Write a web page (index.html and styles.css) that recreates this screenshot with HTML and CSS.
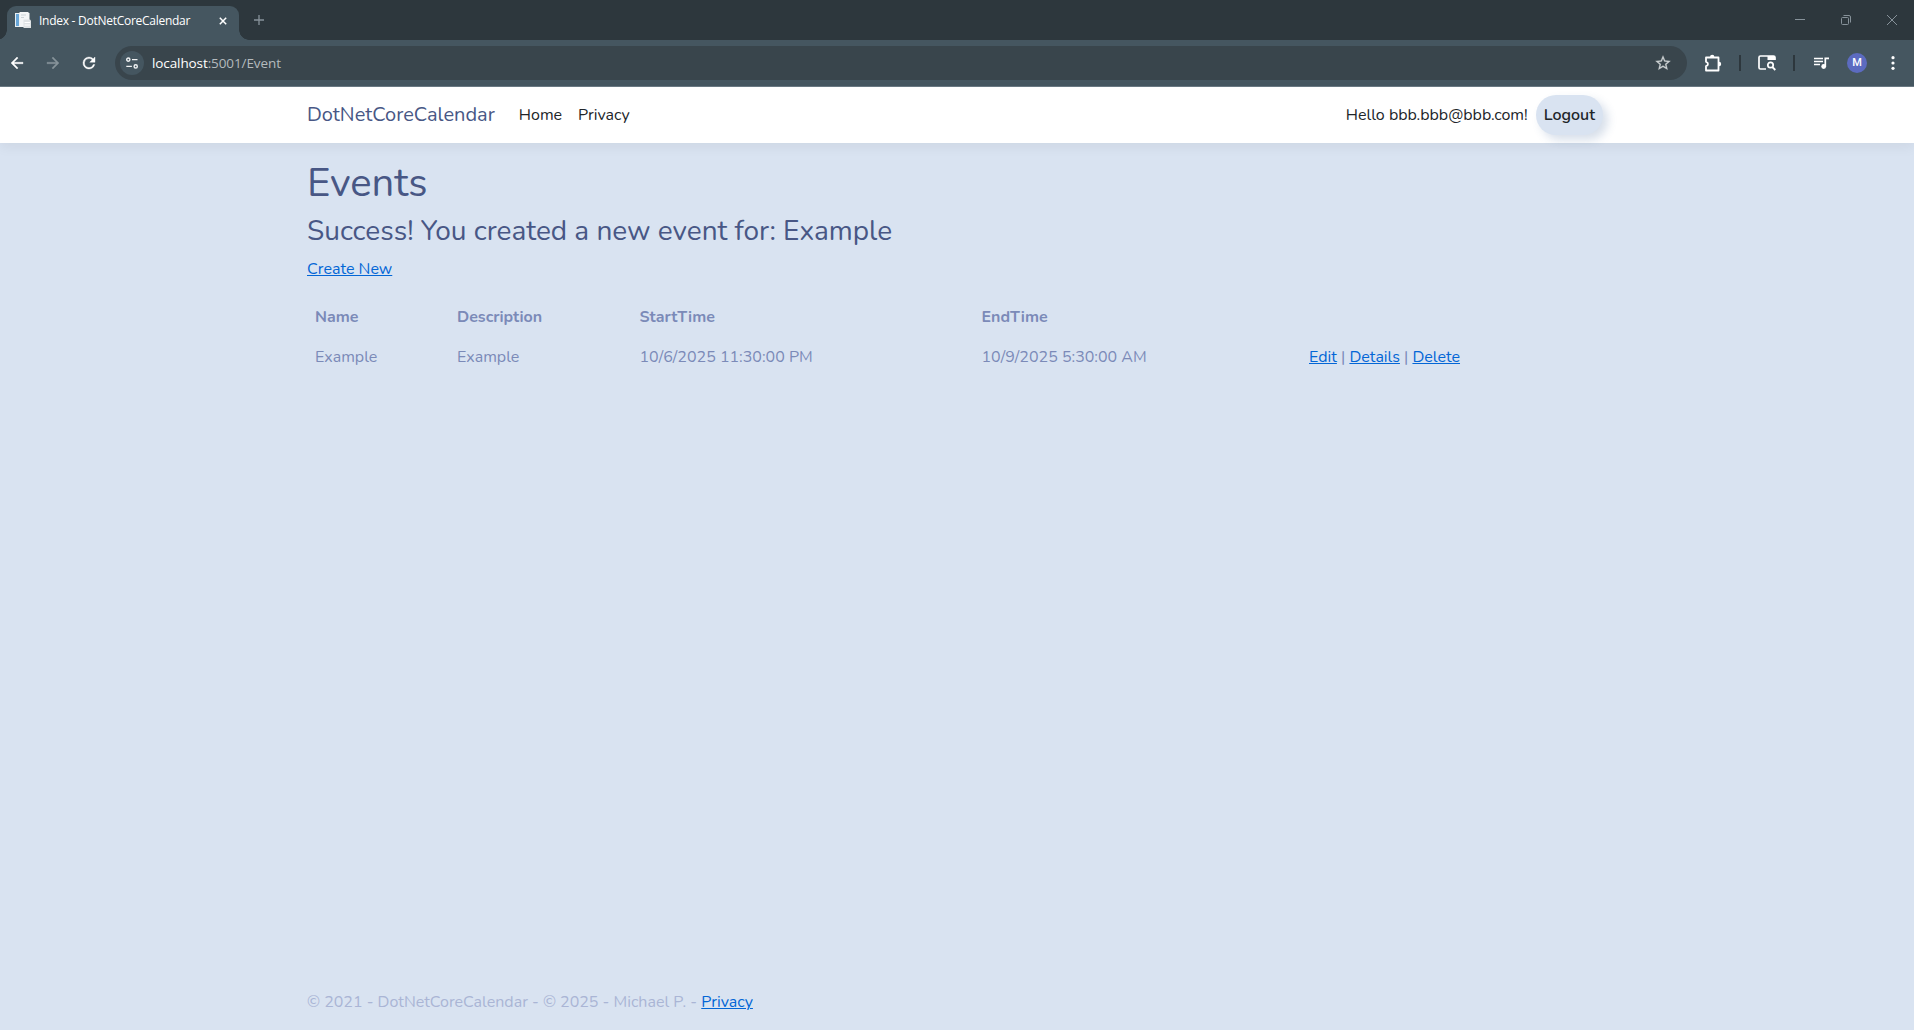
FILE: index.html
```html
<!DOCTYPE html>
<html lang="en">
<head>
<meta charset="utf-8">
<title>Index - DotNetCoreCalendar</title>
<link rel="stylesheet" href="styles.css">
</head>
<body>
<div class="tabstrip">
  <div class="tab">
    <svg class="favicon" width="17" height="17" viewBox="0 0 17 17"><path d="M0 1h8v14H0z" fill="#e6eef3"/><path d="M1 2h3v12H1z" fill="#68a6d8"/><path d="M4.500 0H13l1.500 1.500V15h-10z" fill="#f3f5f6"/><path d="M6 3h5M6 5.500h3" stroke="#ccd3d7"/><path d="M8.500 7.500H15l1 1V16H8.500z" fill="#dfe3e5"/><path d="M9.500 10.500h5.500M9.500 13h5.500" stroke="#fff"/></svg>
    <span class="tab-title">Index - DotNetCoreCalendar</span>
    <svg class="tab-close" width="8" height="8" viewBox="0 0 8 8"><path d="M.8.8l6.400 6.400M7.200.8L.8 7.200" stroke="#fff" stroke-width="1.500"/></svg>
  </div>
  <svg class="new-tab" width="10" height="10" viewBox="0 0 10 10"><path d="M5 0v10M0 5h10" stroke="#87929a" stroke-width="1.300"/></svg>
  <div class="window-buttons">
    <svg width="10" height="10" viewBox="0 0 10 10"><path d="M0 4.500h10"/></svg>
    <svg width="10" height="10" viewBox="0 0 10 10"><rect x=".5" y="2.500" width="7" height="7" rx="1"/><path d="M2.500.5H8Q9.500.5 9.500 2v5.500"/></svg>
    <svg width="10" height="10" viewBox="0 0 10 10"><path d="M0 0l10 10M10 0L0 10"/></svg>
  </div>
</div>
<div class="toolbar">
  <div class="nav-buttons">
    <svg width="18" height="18" viewBox="0 0 24 24"><path d="M20 11H7.830l5.590-5.590L12 4l-8 8 8 8 1.410-1.410L7.830 13H20z" fill="#fff" stroke="#fff" stroke-width=".5"/></svg>
    <svg width="18" height="18" viewBox="0 0 24 24"><path d="M12 4l-1.410 1.410L16.170 11H4v2h12.170l-5.580 5.590L12 20l8-8z" fill="#87939a" stroke="#87939a" stroke-width=".5"/></svg>
    <svg width="18" height="18" viewBox="0 0 24 24"><path d="M17.650 6.350A7.960 7.960 0 0 0 12 4a8 8 0 1 0 7.730 10h-2.080A6 6 0 1 1 12 6c1.660 0 3.140.69 4.220 1.780L13 11h7V4z" fill="#fff" stroke="#fff" stroke-width=".5"/></svg>
  </div>
  <div class="omnibox">
    <span class="site-info"><svg width="12" height="12" viewBox="0 0 12 12" fill="none" stroke="#f1f3f4" stroke-width="1.400"><circle cx="2.300" cy="2.600" r="1.600"/><path d="M6 2.600h5.500M.3 9.400h5.600"/><circle cx="9.700" cy="9.400" r="1.600"/></svg></span>
    <span class="url"><span class="host">localhost</span>:5001/Event</span>
    <svg class="star" width="18" height="18" viewBox="0 0 24 24"><path d="M22 9.240l-7.190-.62L12 2 9.190 8.630 2 9.240l5.460 4.730L5.820 21 12 17.270 18.180 21l-1.630-7.030zM12 15.400l-3.760 2.270 1-4.280-3.320-2.880 4.380-.38L12 6.100l1.710 4.040 4.380.38-3.320 2.880 1 4.280z" fill="#cbd0d2" stroke="#cbd0d2" stroke-width=".3"/></svg>
  </div>
  <div class="actions">
    <svg width="18" height="18" viewBox="0 0 18 18"><path d="M2 3.500h12.500v13H2v-4.300c2.600-.5 2.600-3.900 0-4.400z" fill="none" stroke="#fff" stroke-width="1.800" stroke-linejoin="round"/><path d="M6 3a2.200 2.200 0 0 1 4.400 0zM15 7.800a2.200 2.200 0 0 1 0 4.400z" fill="#fff"/></svg>
    <i class="divider"></i>
    <svg width="18" height="16" viewBox="0 0 18 16"><path d="M8 14H2.500Q1 14 1 12.500v-10Q1 1 2.500 1H15.500Q17 1 17 2.500V5" fill="none" stroke="#fff" stroke-width="1.700"/><path d="M9.500 1H17v4H9.500z" fill="#fff"/><circle cx="12.500" cy="10" r="2.700" fill="none" stroke="#fff" stroke-width="1.700"/><path d="M14.300 12l3 3" stroke="#fff" stroke-width="1.800"/></svg>
    <i class="divider"></i>
    <svg class="media" width="16" height="13" viewBox="0 0 16 13"><path d="M0 1.500h9M0 4.500h9M0 7.500h6" stroke="#fff" stroke-width="1.500"/><circle cx="9.700" cy="9.500" r="2.400" fill="#fff"/><path d="M11.300 9.500V1.300H15" fill="none" stroke="#fff" stroke-width="1.700"/></svg>
    <span class="avatar">M</span>
    <svg width="4" height="14" viewBox="0 0 4 14"><circle cx="2" cy="1.700" r="1.600" fill="#fff"/><circle cx="2" cy="7" r="1.600" fill="#fff"/><circle cx="2" cy="12.300" r="1.600" fill="#fff"/></svg>
  </div>
</div>
<header class="site-header">
  <nav class="container navbar">
    <a class="brand">DotNetCoreCalendar</a>
    <a class="nav-link">Home</a>
    <a class="nav-link">Privacy</a>
    <a class="nav-link greeting">Hello bbb.bbb@bbb.com!</a>
    <button class="logout">Logout</button>
  </nav>
</header>
<main class="container content">
  <h1>Events</h1>
  <h2>Success! You created a new event for: Example</h2>
  <p><a href="#">Create New</a></p>
  <table>
    <colgroup><col class="c-name"><col class="c-desc"><col class="c-start"><col class="c-end"><col></colgroup>
    <thead><tr><th>Name</th><th>Description</th><th>StartTime</th><th>EndTime</th><th></th></tr></thead>
    <tbody><tr><td>Example</td><td>Example</td><td>10/6/2025 11:30:00 PM</td><td>10/9/2025 5:30:00 AM</td><td><a href="#">Edit</a> | <a href="#">Details</a> | <a href="#">Delete</a></td></tr></tbody>
  </table>
</main>
<footer><div class="container">© 2021 - DotNetCoreCalendar - © 2025 - Michael P. - <a href="#">Privacy</a></div></footer>
</body>
</html>
```
FILE: styles.css
```css
* { box-sizing: border-box; }
body {
  margin: 0;
  height: 100vh;
  display: flex;
  flex-direction: column;
  overflow: hidden;
  background: #d9e3f1;
  color: #7b8ab8;
  font: 400 16px/1.5 Nunito, "Open Sans", sans-serif;
}
svg { display: block; flex: none; }
a { color: #0366d6; }

/* Browser frame */
.tabstrip {
  height: 40px;
  flex: none;
  display: flex;
  align-items: center;
  padding-left: 7px;
  background: #2d373d;
}
.tab {
  position: relative;
  align-self: flex-end;
  width: 232px;
  height: 34px;
  display: flex;
  align-items: center;
  padding: 0 12px 5px 8px;
  border-radius: 9px 9px 0 0;
  background: #455660;
}
.tab::before, .tab::after {
  content: "";
  position: absolute;
  bottom: 0;
  width: 10px;
  height: 10px;
}
.tab::before { left: -10px; background: radial-gradient(circle at 0 0, transparent 9.500px, #455660 10px); }
.tab::after { right: -10px; background: radial-gradient(circle at 100% 0, transparent 9.500px, #455660 10px); }
.tab-title {
  margin-left: 7px;
  font: 12px/16px "Segoe UI", "Open Sans", sans-serif;
  letter-spacing: -.27px;
  color: #fff;
}
.tab-close { margin-left: auto; }
.new-tab { margin-left: 15px; }
.window-buttons {
  display: flex;
  gap: 36px;
  margin-left: auto;
  padding-right: 17px;
}
.window-buttons svg { fill: none; stroke: #87929a; }

.toolbar {
  height: 47px;
  flex: none;
  display: flex;
  align-items: center;
  padding: 0 19px 0 8px;
  background: #455660;
  border-bottom: 1px solid #6b7a84;
}
.nav-buttons { display: flex; gap: 18px; }
.omnibox {
  flex: 1;
  height: 34px;
  display: flex;
  align-items: center;
  margin-left: 17px;
  padding: 0 15px 0 5px;
  border-radius: 17px;
  background: #39454c;
}
.site-info {
  width: 24px;
  height: 24px;
  display: grid;
  place-items: center;
  border-radius: 50%;
  background: #455660;
}
.url {
  margin-left: 8px;
  font: 13.500px/20px "Segoe UI", "Open Sans", sans-serif;
  letter-spacing: -.1px;
  color: #b4babd;
}
.host { color: #fff; }
.star { margin-left: auto; }
.actions { display: flex; align-items: center; padding-left: 17px; }
.divider { width: 2px; height: 16px; margin: 0 17px; background: #2d373d; }
.media { margin-left: 2px; }
.avatar {
  width: 20px;
  height: 20px;
  margin: 0 24px 0 17px;
  border-radius: 50%;
  background: #5c6bc0;
  color: #fff;
  font: 500 11px/20px Roboto, sans-serif;
  text-align: center;
}

/* Page */
.container { width: 1300px; margin: 0 auto; }
.site-header {
  height: 56px;
  flex: none;
  background: #fff;
  box-shadow: 0 4px 12px rgba(0, 0, 0, .06);
}
.navbar { height: 100%; display: flex; align-items: center; }
.brand { margin-right: 16px; color: #485785; font-size: 20px; }
.nav-link { padding: 0 8px; color: #212529; }
.greeting { margin-left: auto; }
.logout {
  height: 40px;
  margin-right: 4px;
  padding: 0 8px;
  border: 0;
  border-radius: 20px;
  background: #d9e3f1;
  box-shadow: 5px 5px 10px rgba(55, 94, 148, .2);
  color: #212529;
  font: 600 16px/24px Nunito, "Open Sans", sans-serif;
}
.content { flex: 1; padding-top: 16px; }
h1, h2 { margin: 0 0 8px; font-weight: 400; line-height: 1.2; color: #485785; }
h1 { font-size: 40px; }
h2 { font-size: 28px; }
p { margin: 0 0 16px; }
table { width: 100%; table-layout: fixed; border-collapse: collapse; }
th, td { padding: 8px; text-align: left; }
.c-name { width: 142px; }
.c-desc { width: 182.500px; }
.c-start { width: 342px; }
.c-end { width: 327.500px; }
footer { flex: none; height: 58px; line-height: 60px; color: #aab5d5; }
```
